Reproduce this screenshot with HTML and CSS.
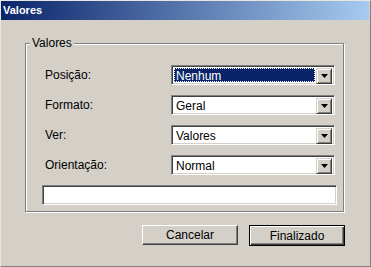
FILE: index.html
```
<!DOCTYPE html>
<html lang="pt">
<head>
    <meta charset="UTF-8">
    <title>Valores</title>
    <link rel="stylesheet" href="styles.css">
</head>
<body>
    <div class="window">
        <div class="titlebar">Valores</div>

        <div class="group">
            <span class="group-title">Valores</span>
            <div class="rows">
                <label class="row-label">Posição:</label>
                <div class="combo">
                    <span class="combo-value selected">Nenhum</span>
                    <span class="drop"><svg width="7" height="4" viewBox="0 0 7 4"><polygon points="0,0 7,0 3.5,4" fill="#000"/></svg></span>
                </div>

                <label class="row-label">Formato:</label>
                <div class="combo">
                    <span class="combo-value">Geral</span>
                    <span class="drop"><svg width="7" height="4" viewBox="0 0 7 4"><polygon points="0,0 7,0 3.5,4" fill="#000"/></svg></span>
                </div>

                <label class="row-label">Ver:</label>
                <div class="combo">
                    <span class="combo-value">Valores</span>
                    <span class="drop"><svg width="7" height="4" viewBox="0 0 7 4"><polygon points="0,0 7,0 3.5,4" fill="#000"/></svg></span>
                </div>

                <label class="row-label">Orientação:</label>
                <div class="combo">
                    <span class="combo-value">Normal</span>
                    <span class="drop"><svg width="7" height="4" viewBox="0 0 7 4"><polygon points="0,0 7,0 3.5,4" fill="#000"/></svg></span>
                </div>
            </div>
            <input type="text" class="field">
        </div>

        <div class="buttons">
            <button class="btn">Cancelar</button>
            <button class="btn default">Finalizado</button>
        </div>
    </div>
</body>
</html>
```

FILE: styles.css
```
body {
    margin: 0;
    font-family: "Liberation Sans", Arial, sans-serif;
    font-size: 12px;
    color: #000000;
}

.window {
    width: 371px;
    height: 267px;
    box-sizing: border-box;
    background-color: #d4d0c8;
    border-top: 1px solid #e8e6e0;
    border-left: 1px solid #e8e6e0;
    border-right: 1px solid #808080;
    border-bottom: 1px solid #808080;
    display: flex;
    flex-direction: column;
}

.titlebar {
    height: 19px;
    line-height: 19px;
    margin-right: 1px;
    padding-left: 2px;
    background: linear-gradient(to right, #0a246a, #a6caf0);
    color: #ffffff;
    font-weight: bold;
    font-size: 11px;
}

/* group box with etched border */
.group {
    position: relative;
    margin: 23px 0 0 24px;
    width: 319px;
    height: 169px;
    box-sizing: border-box;
    border: 1px solid #808080;
    box-shadow: 1px 1px 0 #ffffff, inset 1px 1px 0 #ffffff;
    padding-top: 21px;
}

.group-title {
    position: absolute;
    top: -8px;
    left: 4px;
    padding: 0 2px;
    line-height: 14px;
    background-color: #d4d0c8;
}

.rows {
    display: grid;
    grid-template-columns: 126px 164px;
    grid-auto-rows: 20px;
    row-gap: 10px;
    padding-left: 19px;
}

.row-label {
    align-self: center;
}

.combo {
    height: 20px;
    box-sizing: border-box;
    border: 1px solid;
    border-color: #808080 #ffffff #ffffff #808080;
    box-shadow: inset 1px 1px 0 #404040, inset -1px -1px 0 #d4d0c8;
    background-color: #ffffff;
    display: flex;
    padding: 2px;
}

.combo-value {
    flex: 1;
    line-height: 16px;
    padding-left: 2px;
    margin-right: 1px;
}

.combo-value.selected {
    background-color: #0a246a;
    color: #ffffff;
    outline: 1px dotted #ffffff;
    outline-offset: -1px;
}

.drop {
    width: 16px;
    height: 16px;
    box-sizing: border-box;
    background-color: #d4d0c8;
    border: 1px solid;
    border-color: #d4d0c8 #404040 #404040 #d4d0c8;
    box-shadow: inset 1px 1px 0 #ffffff, inset -1px -1px 0 #808080;
    display: flex;
    justify-content: center;
    align-items: center;
}

.drop svg {
    display: block;
}

.field {
    display: block;
    margin: 10px 0 0 16px;
    width: 295px;
    height: 20px;
    box-sizing: border-box;
    border: 1px solid;
    border-color: #808080 #ffffff #ffffff #808080;
    box-shadow: inset 1px 1px 0 #404040, inset -1px -1px 0 #d4d0c8;
    background-color: #ffffff;
    padding: 0;
    outline: none;
}

.buttons {
    display: flex;
    justify-content: flex-end;
    gap: 11px;
    margin-top: 13px;
    padding-right: 25px;
}

.btn {
    width: 96px;
    height: 20px;
    box-sizing: border-box;
    padding: 0;
    font-family: "Liberation Sans", Arial, sans-serif;
    font-size: 12px;
    color: #000000;
    background-color: #d4d0c8;
    border: 1px solid;
    border-color: #ffffff #404040 #404040 #ffffff;
    box-shadow: inset -1px -1px 0 #808080;
}

.btn.default {
    height: 21px;
    border-color: #000000;
    box-shadow: inset 1px 1px 0 #ffffff, inset -1px -1px 0 #404040, inset -2px -2px 0 #808080;
}
```
